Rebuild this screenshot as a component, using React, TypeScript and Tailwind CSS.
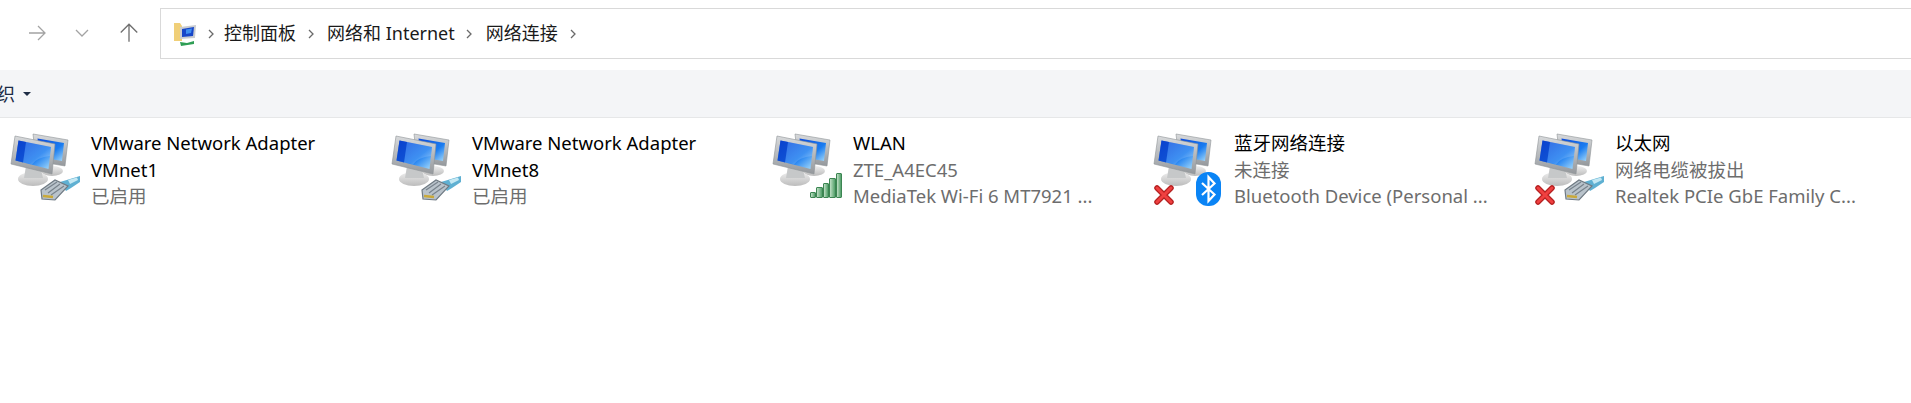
const sans = "font-['Noto_Sans','Noto_Sans_CJK_SC',sans-serif]";

function Computers() {
  return (
    <svg width="62" height="56" viewBox="0 0 62 56" className="absolute left-0 top-0">
      <defs>
        <linearGradient id="scr" x1="0" y1="0" x2="1" y2="1">
          <stop offset="0" stopColor="#0a49dc" />
          <stop offset="0.6" stopColor="#1a7cf0" />
          <stop offset="1" stopColor="#a8dcfa" />
        </linearGradient>
        <linearGradient id="bez" x1="0" y1="0" x2="0" y2="1">
          <stop offset="0" stopColor="#d8dadc" />
          <stop offset="1" stopColor="#94989c" />
        </linearGradient>
        <linearGradient id="stand" x1="0" y1="0" x2="0" y2="1">
          <stop offset="0" stopColor="#eeeeee" />
          <stop offset="1" stopColor="#bcbcbc" />
        </linearGradient>
      </defs>
      {/* back monitor */}
      <ellipse cx="42" cy="38" rx="11" ry="5" fill="url(#stand)" />
      <path d="M23 1 L58 7 L55 33 L26 28 Z" fill="url(#bez)" stroke="#8f9397" strokeWidth=".6" />
      <path d="M27.500 5.500 L54 10 L52 28 L29.500 24 Z" fill="url(#scr)" />
      {/* front monitor */}
      <ellipse cx="23" cy="46" rx="15" ry="7" fill="url(#stand)" />
      <path d="M16 33 L31 36 L33 45 H14 Z" fill="#c6c8c9" />
      <path d="M5 3 L45 11 L42 41 L1 31 Z" fill="url(#bez)" stroke="#8f9397" strokeWidth=".6" />
      <path d="M8.500 7.500 L41 14 L38.500 36 L5.500 27.500 Z" fill="url(#scr)" />
      <path d="M8.500 7.500 L16 9 L13 29.500 L5.500 27.500 Z" fill="#0a3cc4" opacity=".6" />
      <path d="M16 9 L41 14 L40 23 Q27 24 22 31.500 L13 29.500 Z" fill="#fff" opacity=".16" />
    </svg>
  );
}

function Plug({ className }: { className: string }) {
  return (
    <svg width="40" height="25" viewBox="0 0 40 25" className={className}>
      <path d="M20 6 L30 3 L40 0 L40 6 L31 12 L26 15 Z" fill="#5fb0d2" />
      <path d="M28 4 L37 1.500 L38 4 L30 8 Z" fill="#c4e8f3" />
      <path d="M1 14 L15 4 L28 10 L15 24 L2 23 Z" fill="#b9c3cb" stroke="#6f7a83" strokeWidth="1.200" />
      <path d="M5 14 L17 6 M8 17 L20 8 M11 19 L24 10" stroke="#78838c" strokeWidth="1.200" />
      <path d="M3 20 L13 21" stroke="#c9a93a" strokeWidth="2.500" />
    </svg>
  );
}

function Signal({ className }: { className: string }) {
  const bars = [6, 11, 15, 20, 25];
  return (
    <div className={`flex items-end ${className}`}>
      {bars.map((h) => (
        <div
          key={h}
          style={{ height: h }}
          className="w-[6.400px] rounded-[1px] border border-[#3c8552] bg-gradient-to-r from-[#bfe0c6] to-[#4f9f69]"
        />
      ))}
    </div>
  );
}

function RedX({ className }: { className: string }) {
  return (
    <svg width="22" height="22" viewBox="0 0 22 22" className={className}>
      <path d="M4 4 L18 18 M18 4 L4 18" stroke="#b52020" strokeWidth="5.500" strokeLinecap="round" />
      <path d="M4 4 L18 18 M18 4 L4 18" stroke="#f04040" strokeWidth="3" strokeLinecap="round" />
    </svg>
  );
}

function Bluetooth({ className }: { className: string }) {
  return (
    <svg width="25" height="34" viewBox="0 0 25 34" className={className}>
      <rect x="0" y="0" width="25" height="34" rx="12" fill="#0a84f5" />
      <path d="M6 11 L18.500 22.500 L12.500 29 V5 L18.500 11.500 L6 23" fill="none" stroke="#fff" strokeWidth="2.200" />
    </svg>
  );
}

function Chevron({ className }: { className: string }) {
  return (
    <svg width="8" height="12" viewBox="0 0 8 12" fill="none" stroke="#6a6a6a" strokeWidth="1.300" className={className}>
      <path d="M2 2 L6 6 L2 10" />
    </svg>
  );
}

const items = [
  { name: ["VMware Network Adapter", "VMnet1"], lines: ["已启用"], badge: "plug", x: false },
  { name: ["VMware Network Adapter", "VMnet8"], lines: ["已启用"], badge: "plug", x: false },
  { name: ["WLAN"], lines: ["ZTE_A4EC45", "MediaTek Wi-Fi 6 MT7921 ..."], badge: "signal", x: false },
  { name: ["蓝牙网络连接"], lines: ["未连接", "Bluetooth Device (Personal ..."], badge: "bt", x: true },
  { name: ["以太网"], lines: ["网络电缆被拔出", "Realtek PCIe GbE Family C..."], badge: "plug", x: true },
];

export default function App() {
  return (
    <div className={`h-[403px] w-[1911px] overflow-hidden bg-white ${sans}`}>
      {/* nav + address bar */}
      <div className="flex h-[70px] items-start">
        <div className="flex h-[66px] w-[160px] shrink-0 items-center pl-[27px]">
          <svg width="20" height="20" viewBox="0 0 20 20" fill="none" stroke="#a3a3a3" strokeWidth="1.300">
            <path d="M2 10 H18 M11 3 L18 10 L11 17" />
          </svg>
          <svg width="16" height="12" viewBox="0 0 16 12" fill="none" stroke="#a3a3a3" strokeWidth="1.300" className="ml-[27px]">
            <path d="M2 3 L8 9 L14 3" />
          </svg>
          <svg width="22" height="22" viewBox="0 0 20 20" fill="none" stroke="#6f6f6f" strokeWidth="1.200" className="ml-[28px]">
            <path d="M10 18 V2 M2.500 9.500 L10 2 L17.500 9.500" />
          </svg>
        </div>
        <div className="mt-[8px] flex h-[51px] flex-1 items-center border-y border-l border-[#d9d9d9] pl-[12px] text-[18px] text-[#1a1a1a]">
          <svg width="24" height="26" viewBox="0 0 24 26">
            <path d="M1 2 H7 L9 5 V20 H1 Z" fill="#f0cf78" />
            <path d="M7 6 L23 4 L22 17 L7 18 Z" fill="#c9ccd0" />
            <path d="M9 8 L21 6 L20 15 L9 16 Z" fill="#1746c9" />
            <path d="M13 8.500 L19 7.500 L18 12 L13 13 Z" fill="#3f8ff0" />
            <path d="M7 21 L14 22 L21 20 L21 23 L8 25 Z" fill="#2f9e55" />
          </svg>
          <Chevron className="ml-[10px]" />
          <span className="ml-[9px]">控制面板</span>
          <Chevron className="ml-[11px]" />
          <span className="ml-[12px]">网络和 Internet</span>
          <Chevron className="ml-[10px]" />
          <span className="ml-[13px]">网络连接</span>
          <Chevron className="ml-[11px]" />
        </div>
      </div>

      {/* command bar */}
      <div className="flex h-[48px] items-center overflow-hidden border-b border-[#e6e7e8] bg-[#f4f5f7]">
        <span className="ml-[-3px] text-[18px] leading-none text-[#1a2a44]">织</span>
        <span className="ml-[8px] h-0 w-0 border-x-[4px] border-t-[4px] border-x-transparent border-t-[#1f2d45]" />
      </div>

      {/* connections */}
      <div className="flex pt-[12px]">
        {items.map((item, i) => (
          <div key={i} className="flex w-[381px] shrink-0 pl-[10px]">
            <div className="relative mt-[3px] h-[74px] w-[81px] shrink-0">
              <Computers />
              {item.badge === "plug" && <Plug className="absolute left-[30px] top-[43px]" />}
              {item.badge === "signal" && <Signal className="absolute left-[38px] top-[40px]" />}
              {item.badge === "bt" && <Bluetooth className="absolute left-[43px] top-[39px]" />}
              {item.x && <RedX className="absolute left-0 top-[51px]" />}
            </div>
            <div className="whitespace-nowrap text-[18.500px] leading-[26.500px]">
              {item.name.map((n) => (
                <div key={n} className="text-black">{n}</div>
              ))}
              {item.lines.map((l) => (
                <div key={l} className="text-[#6d6d6d]">{l}</div>
              ))}
            </div>
          </div>
        ))}
      </div>
    </div>
  );
}
